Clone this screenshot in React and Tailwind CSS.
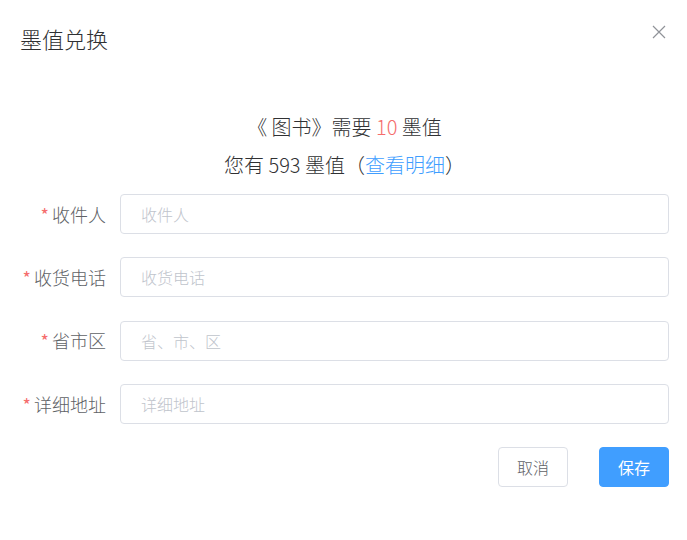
import React from 'react';

const fields = [
  { label: '收件人', placeholder: '收件人' },
  { label: '收货电话', placeholder: '收货电话' },
  { label: '省市区', placeholder: '省、市、区' },
  { label: '详细地址', placeholder: '详细地址' },
];

const App = () => {
  return (
    <div
      className="w-[687px] h-[540px] bg-white text-[#303133] font-light"
      style={{ fontFamily: '"Noto Sans CJK SC", "Liberation Sans", sans-serif' }}
    >
      {/* header */}
      <div className="flex items-start justify-between pl-5 pr-[21px] pt-5">
        <h2 className="text-[22px] leading-[36px] font-light text-[#303133]">墨值兑换</h2>
        <button className="mt-[5px] text-[#909399]">
          <svg width="14" height="14" viewBox="0 0 14 14" fill="none" stroke="currentColor" strokeWidth="1.2">
            <path d="M1 1L13 13M13 1L1 13" />
          </svg>
        </button>
      </div>

      {/* body */}
      <div className="pl-5 pr-[18px] pt-[52px]">
        <div className="text-center text-[20px] leading-[38px] text-[#303133]">
          <p>
            《 图书》需要 <span className="text-[#f56c6c]">10</span> 墨值
          </p>
          <p>
            您有 593 墨值（<span className="text-[#409eff] cursor-pointer">查看明细</span>）
          </p>
        </div>

        <form className="mt-[10px] flex flex-col gap-[23.4px]">
          {fields.map((f) => (
            <div key={f.label} className="flex items-center">
              <label className="w-[100px] pr-[14px] text-right text-[18px] text-[#606266] whitespace-nowrap">
                <span className="text-[#f56c6c] mr-[3px] text-[18px] font-normal">*</span>
                {f.label}
              </label>
              <input
                placeholder={f.placeholder}
                className="flex-1 h-10 rounded border border-[#dcdfe6] px-[20px] text-[16px] text-[#606266] placeholder:text-[#c0c4cc] outline-none"
              />
            </div>
          ))}
        </form>

        <div className="mt-[23px] flex justify-end gap-[31px]">
          <button className="w-[70px] h-10 rounded border border-[#dcdfe6] bg-white text-[16px] text-[#606266]">
            取消
          </button>
          <button className="w-[70px] h-10 rounded border border-[#409eff] bg-[#409eff] text-[16px] text-white font-normal">
            保存
          </button>
        </div>
      </div>
    </div>
  );
};

export default App;
